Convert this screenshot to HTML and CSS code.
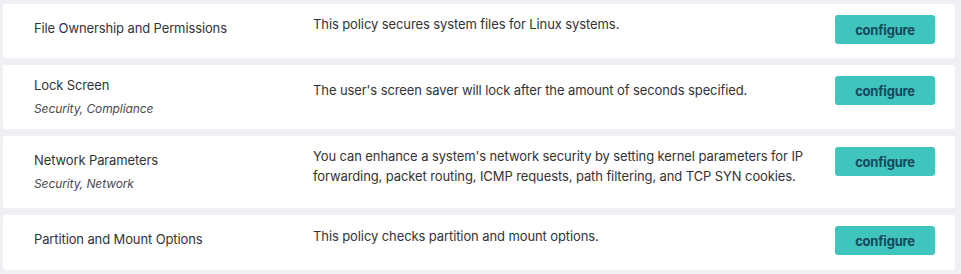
FILE: index.html
```html
<!DOCTYPE html>
<html lang="en">
<head>
<meta charset="utf-8">
<title>Policies</title>
<link rel="stylesheet" href="styles.css">
</head>
<body>
<div class="list">
  <div class="card card--short">
    <div class="info">
      <div class="title">File Ownership and Permissions</div>
    </div>
    <div class="desc">This policy secures system files for Linux systems.</div>
    <button class="btn">configure</button>
  </div>
  <div class="card card--tagged card--offset">
    <div class="info">
      <div class="title">Lock Screen</div>
      <div class="tags">Security, Compliance</div>
    </div>
    <div class="desc">The user's screen saver will lock after the amount of seconds specified.</div>
    <button class="btn">configure</button>
  </div>
  <div class="card card--tall">
    <div class="info">
      <div class="title">Network Parameters</div>
      <div class="tags">Security, Network</div>
    </div>
    <div class="desc">You can enhance a system's network security by setting kernel parameters for IP forwarding, packet routing, ICMP requests, path filtering, and TCP SYN cookies.</div>
    <button class="btn">configure</button>
  </div>
  <div class="card card--short card--last">
    <div class="info">
      <div class="title">Partition and Mount Options</div>
    </div>
    <div class="desc desc--low">This policy checks partition and mount options.</div>
    <button class="btn">configure</button>
  </div>
</div>
</body>
</html>
```
FILE: styles.css
```css
* { box-sizing: border-box; }
html, body { margin: 0; }
body {
  background: #efeff4;
  font-family: Inter, "Noto Sans", sans-serif;
  color: #333336;
  padding: 4px 6px 0 3px;
}
.list {
  display: flex;
  flex-direction: column;
  gap: 7px;
}
.card {
  display: flex;
  align-items: flex-start;
  background: #fff;
  padding: 10px 20px 0 31px;
  border-radius: 2px;
}
.card--short { height: 54px; }
.card--last { height: 55px; }
.card--tagged { height: 64px; }
.card--tall { height: 72px; }
.info {
  width: 279px;
  flex: none;
  margin-top: 4px;
}
.card--offset .info { margin-top: 0; }
.title {
  font-size: 13px;
  line-height: 20px;
  letter-spacing: -0.12px;
}
.tags {
  font-size: 12px;
  line-height: 20px;
  font-style: italic;
  color: #4a4a50;
  margin-top: 4px;
  letter-spacing: -0.1px;
}
.desc {
  flex: 1;
  font-size: 13px;
  line-height: 20px;
  letter-spacing: -0.1px;
  padding-right: 20px;
}
.card--offset .desc { margin-top: 5px; }
.desc--low { margin-top: 1px; }
.btn {
  flex: none;
  margin-top: 1px;
  width: 100px;
  height: 29px;
  border: none;
  border-radius: 3px;
  background: #3fc5bd;
  color: #15495a;
  font-family: Inter, "Noto Sans", sans-serif;
  font-weight: 700;
  font-size: 13px;
  letter-spacing: -0.2px;
  padding: 0;
}
```
